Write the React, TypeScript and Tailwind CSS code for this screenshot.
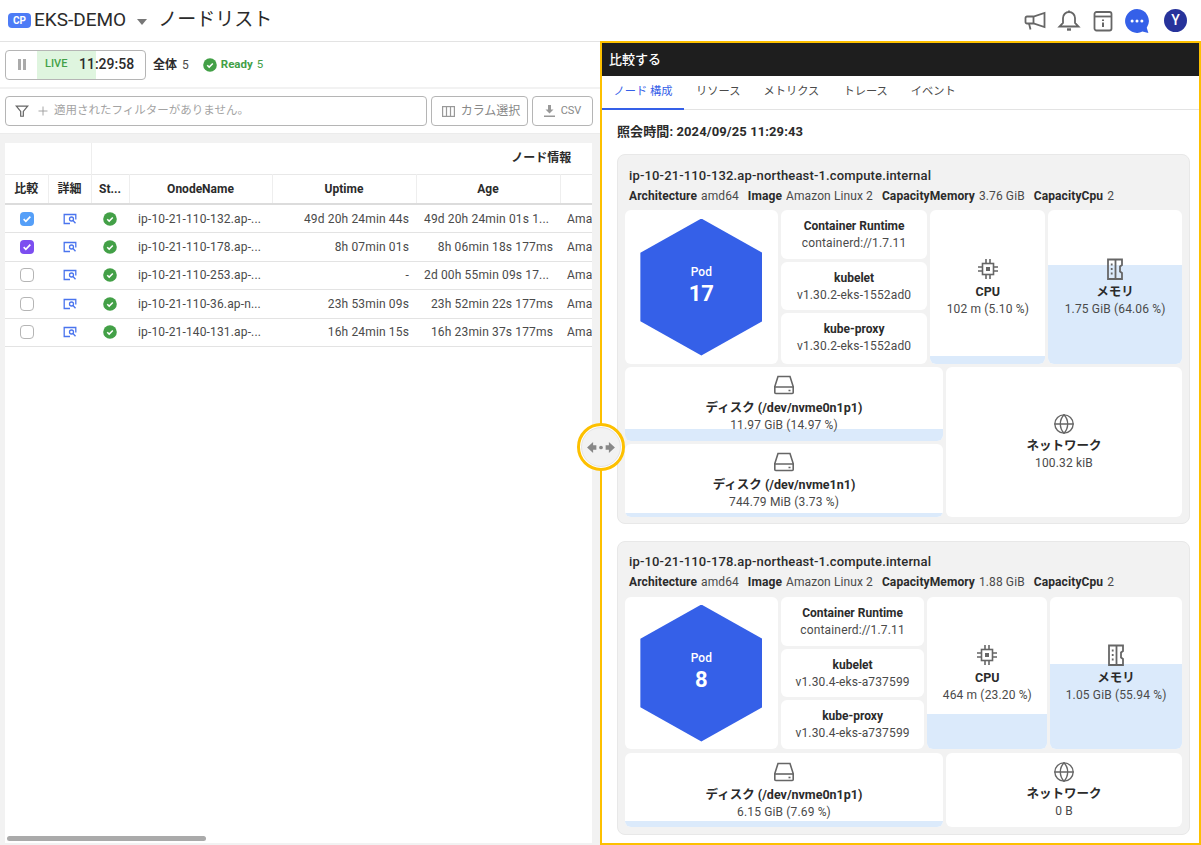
import React from 'react';
import { Globe, Plus } from 'lucide-react';

const nodes = [
  { name: 'ip-10-21-110-132.ap-...', uptime: '49d 20h 24min 44s', age: '49d 20h 24min 01s 1...', check: 'blue' },
  { name: 'ip-10-21-110-178.ap-...', uptime: '8h 07min 01s', age: '8h 06min 18s 177ms', check: 'purple' },
  { name: 'ip-10-21-110-253.ap-...', uptime: '-', age: '2d 00h 55min 09s 17...', check: '' },
  { name: 'ip-10-21-110-36.ap-n...', uptime: '23h 53min 09s', age: '23h 52min 22s 177ms', check: '' },
  { name: 'ip-10-21-140-131.ap-...', uptime: '16h 24min 15s', age: '16h 23min 37s 177ms', check: '' },
];

function CheckCircle({ className }: { className: string }) {
  return (
    <svg viewBox="0 0 14 14" className={className}>
      <circle cx="7" cy="7" r="6.8" fill="#43a047" />
      <path d="M4.2 7.2l2 1.9 3.6-3.7" fill="none" stroke="#fff" strokeWidth="1.5" />
    </svg>
  );
}

function CpuIcon() {
  return (
    <svg viewBox="0 0 24 24" className="w-6 h-6 text-[#666]" fill="none" stroke="currentColor" strokeWidth="1.6">
      <rect x="6.5" y="6.5" width="11" height="11" />
      <rect x="10" y="10" width="4" height="4" fill="currentColor" stroke="none" />
      <path d="M10 2v4.5M14 2v4.5M10 17.5V22M14 17.5V22M2 10h4.5M2 14h4.5M17.5 10H22M17.5 14H22" />
    </svg>
  );
}

function MemoryIcon() {
  return (
    <svg viewBox="0 0 24 24" className="w-6 h-6 text-[#666]" fill="none" stroke="currentColor" strokeWidth="1.8">
      <path d="M5 2.5h14v5.5l-2 1.5v5l2 1.5v6H5z" />
      <path d="M12.5 2.5v19" />
      <path d="M8.7 6.5v2M8.7 11v2M8.7 15.5v2" />
    </svg>
  );
}

function DiskIcon() {
  return (
    <svg viewBox="0 0 24 24" className="w-6 h-6 text-[#666]" fill="none" stroke="currentColor" strokeWidth="1.6">
      <path d="M6 3.5h12l3.2 10v6a1 1 0 0 1-1 1H3.8a1 1 0 0 1-1-1v-6z" />
      <path d="M2.8 14h18.4" />
      <path d="M16.5 17.5h2" />
    </svg>
  );
}

function Tile({ className, fill, icon, title, value }: { className: string; fill?: string; icon?: React.ReactNode; title: string; value: string }) {
  return (
    <div className={`relative overflow-hidden bg-white rounded-md flex flex-col items-center justify-center ${className}`}>
      {fill && <div className={`absolute left-0 right-0 bottom-0 bg-[#dbeafb] ${fill}`} />}
      <div className="relative flex flex-col items-center">
        {icon}
        <div className="mt-[2px] text-[12.5px] leading-[18px] font-bold text-[#2b2b2b] whitespace-nowrap">{title}</div>
        <div className="text-xs leading-[17px] tracking-[0.15px] text-[#4a4a4a] whitespace-nowrap">{value}</div>
      </div>
    </div>
  );
}

function InfoTile({ title, value, className }: { title: string; value: string; className: string }) {
  return (
    <div className={`bg-white rounded-md flex flex-col items-center justify-center ${className}`}>
      <div className="text-xs leading-[18px] font-bold text-[#2b2b2b] whitespace-nowrap">{title}</div>
      <div className="text-xs leading-[17px] tracking-[0.15px] text-[#4a4a4a] whitespace-nowrap">{value}</div>
    </div>
  );
}

function Hex({ pods, className }: { pods: number; className: string }) {
  return (
    <div className={`bg-white rounded-md flex items-center justify-center w-[153px] ${className}`}>
      <div className="w-[122px] h-[137px] pb-[4px] bg-[#3560e8] text-white flex flex-col items-center justify-center [clip-path:polygon(50%_0,100%_25%,100%_75%,50%_100%,0_75%,0_25%)]">
        <div className="text-xs leading-[18px] font-medium">Pod</div>
        <div className="text-[22px] leading-[26px] font-bold">{pods}</div>
      </div>
    </div>
  );
}

function Meta({ memory, cpu }: { memory: string; cpu: string }) {
  const items = [['Architecture', 'amd64'], ['Image', 'Amazon Linux 2'], ['CapacityMemory', memory], ['CapacityCpu', cpu]];
  return (
    <div className="flex gap-[9px] text-xs leading-[18px] tracking-[0.1px] mt-[2px] whitespace-nowrap">
      {items.map(([k, v]) => (
        <div key={k} className="flex gap-1">
          <span className="font-bold text-[#2b2b2b]">{k}</span>
          <span className="text-[#4a4a4a]">{v}</span>
        </div>
      ))}
    </div>
  );
}

export default function App() {
  return (
    <div className="w-[1201px] h-[845px] relative overflow-hidden bg-white text-[#2b2b2b] font-['Roboto','Noto_Sans_CJK_JP',sans-serif]">
      {/* top bar */}
      <div className="h-[42px] border-b border-[#e3e3e3] flex items-center pl-2 pr-[14px]">
        <span className="w-[23px] h-[15px] rounded-[4px] bg-[#4d7cf6] text-white text-[10px] leading-[15px] font-bold text-center">CP</span>
        <span className="ml-[3px] text-[19px] text-[#2b2b2b]">EKS-DEMO</span>
        <span className="ml-[11px] w-0 h-0 border-l-[5px] border-r-[5px] border-t-[6px] border-l-transparent border-r-transparent border-t-[#777] mt-[3px]" />
        <span className="ml-[11px] text-[19px]">ノードリスト</span>
        <div className="ml-auto flex items-center">
          <svg viewBox="0 0 24 24" className="w-6 h-6 text-[#666]" fill="none" stroke="currentColor" strokeWidth="1.8">
            <path d="M21.5 4v14L10.5 14.5H4A1.5 1.5 0 0 1 2.5 13V9A1.5 1.5 0 0 1 4 7.5h6.5z" />
            <path d="M10.5 7.5v7M6 14.5l1.5 6" />
          </svg>
          <svg viewBox="0 0 24 24" className="ml-[10px] w-6 h-6 text-[#666]" fill="none" stroke="currentColor" strokeWidth="1.8">
            <path d="M12 3a6 6 0 0 0-6 6v5l-3.5 3.5h19L18 14V9a6 6 0 0 0-6-6z" />
            <path d="M12 1.5V3" />
            <path d="M10 20.5h4" strokeWidth="2.4" />
          </svg>
          <svg viewBox="0 0 24 24" className="ml-[10px] w-6 h-6 text-[#666]" fill="none" stroke="currentColor" strokeWidth="1.8">
            <rect x="3.5" y="3" width="17" height="18.5" rx="2" />
            <path d="M3.5 7.5h17" />
            <path d="M12 10.5v1.5M12 13.5v4.5" strokeWidth="2" />
          </svg>
          <svg viewBox="0 0 24 24" className="ml-[9px] w-[26px] h-[26px]">
            <path d="M12 1a11 11 0 1 0 5 20.8L22.5 23 21 18.2A11 11 0 0 0 12 1z" fill="#3560e8" />
            <circle cx="7.5" cy="12" r="1.4" fill="#fff" />
            <circle cx="12" cy="12" r="1.4" fill="#fff" />
            <circle cx="16.5" cy="12" r="1.4" fill="#fff" />
          </svg>
          <span className="ml-[14px] w-[23px] h-[23px] rounded-full bg-[#27339b] text-white text-[14px] font-medium flex items-center justify-center">Y</span>
        </div>
      </div>

      <div className="flex h-[803px]">
        {/* left panel */}
        <div className="relative w-[600px] bg-[#f2f2f2] flex flex-col shrink-0">
          <div className="h-[45px] bg-white flex items-center pl-[5px] pr-2 text-xs">
            <div className="h-[30px] w-[141px] border border-[#b5b5b5] rounded-[4px] flex overflow-hidden">
              <div className="w-[31px] flex items-center justify-center gap-[2px]">
                <span className="w-[3px] h-[11px] bg-[#aaa]" />
                <span className="w-[3px] h-[11px] bg-[#aaa]" />
              </div>
              <div className="w-[59px] bg-[#dff5df] flex items-center pl-2 text-[11px] font-medium text-[#43a047]">LIVE</div>
              <span className="-ml-[17px] self-center text-[14px] font-medium text-[#2b2b2b]">11:29:58</span>
            </div>
            <span className="ml-[7px] font-bold text-[#2b2b2b]">全体</span>
            <span className="ml-[5px] text-[#4a4a4a]">5</span>
            <CheckCircle className="ml-[14px] w-[14px] h-[14px]" />
            <span className="ml-[4px] text-[11.5px] font-bold text-[#43a047]">Ready</span>
            <span className="ml-[4px] text-[11.5px] text-[#43a047]">5</span>
          </div>
          <div className="mt-[2px] h-[45px] bg-white flex items-center gap-[4px] pl-[5px] border-b border-[#ececec]">
            <div className="w-[422px] h-[30px] border border-[#b5b5b5] rounded-[4px] flex items-center pl-[9px] text-[11.5px] text-[#a3a3a3]">
              <svg viewBox="0 0 16 16" className="w-[14px] h-[14px] text-[#666]" fill="none" stroke="currentColor" strokeWidth="1.4">
                <path d="M1.5 2.5h13l-5 6v5.5h-3V8.5z" />
              </svg>
              <Plus className="ml-[7px] w-[14px] h-[14px] text-[#999]" strokeWidth={1.5} />
              <span className="ml-[4px]">適用されたフィルターがありません。</span>
            </div>
            <div className="w-[97px] h-[30px] border border-[#b5b5b5] rounded-[4px] flex items-center justify-center gap-[6px] pl-[3px] text-xs text-[#888]">
              <svg viewBox="0 0 13 11" className="w-[13px] h-[11px]" fill="none" stroke="#999" strokeWidth="1.2">
                <rect x="0.6" y="0.6" width="11.8" height="9.8" />
                <path d="M4.5 0.6v9.8M8.5 0.6v9.8" />
              </svg>
              カラム選択
            </div>
            <div className="w-[61px] h-[30px] border border-[#b5b5b5] rounded-[4px] flex items-center justify-center gap-[6px] text-[11px] text-[#888]">
              <svg viewBox="0 0 11 12" className="w-[11px] h-[12px]" fill="#999">
                <path d="M4 0h3v4.5h2.5L5.5 8.5l-4-4H4zM0 10.4h11V12H0z" />
              </svg>
              CSV
            </div>
          </div>
          <div className="ml-[5px] mt-[9px] w-[587px] h-[700px] bg-white overflow-hidden">
            <table className="table-fixed w-[986px] border-collapse text-xs">
              <colgroup>
                <col className="w-[43px]" />
                <col className="w-[43px]" />
                <col className="w-[38px]" />
                <col className="w-[143px]" />
                <col className="w-[144px]" />
                <col className="w-[144px]" />
                <col className="w-[431px]" />
              </colgroup>
              <thead>
                <tr className="h-[31px] border-b border-[#e8e8e8]">
                  <th colSpan={2} className="border-r border-[#eee]" />
                  <th colSpan={5} className="font-bold text-center text-[#2b2b2b]">ノード情報</th>
                </tr>
                <tr className="h-[30px] border-b-2 border-[#dcdcdc]">
                  {['比較', '詳細', 'St...', 'OnodeName', 'Uptime', 'Age', ''].map((h, i) => (
                    <th key={i} className="font-bold text-center text-[#2b2b2b] border-r border-[#eee]">{h}</th>
                  ))}
                </tr>
              </thead>
              <tbody>
                {nodes.map(n => (
                  <tr key={n.name} className="h-[28.5px] border-b border-[#e3e3e3] text-[#4a4a4a] tracking-[0.15px]">
                    <td>
                      {n.check ? (
                        <span className={`mx-auto w-[14px] h-[14px] rounded-[4px] flex items-center justify-center ${n.check === 'blue' ? 'bg-[#559ff8]' : 'bg-[#7c4ef0]'}`}>
                          <svg viewBox="0 0 12 12" className="w-[10px] h-[10px]" fill="none" stroke="#fff" strokeWidth="2"><path d="M2 6.2l2.6 2.5L10 3.2" /></svg>
                        </span>
                      ) : (
                        <span className="block mx-auto w-[14px] h-[14px] rounded-[4px] border border-[#b5b5b5] bg-white" />
                      )}
                    </td>
                    <td>
                      <svg viewBox="0 0 14 12" className="mx-auto w-[14px] h-[12px]" fill="none" stroke="#4a74ee" strokeWidth="1.3">
                        <path d="M7 10.5H1.2V1.5h11.6v5" />
                        <circle cx="8.5" cy="6" r="2" />
                        <path d="M10 7.5l2.5 2.8" />
                      </svg>
                    </td>
                    <td><CheckCircle className="mx-auto w-[14px] h-[14px]" /></td>
                    <td className="pl-[9px] whitespace-nowrap">{n.name}</td>
                    <td className="pr-[7px] text-right whitespace-nowrap">{n.uptime}</td>
                    <td className={`whitespace-nowrap ${n.age.endsWith('...') ? 'pl-[8px] text-left' : 'pr-[7px] text-right'}`}>{n.age}</td>
                    <td className="pl-[7px]">Amazon Linux 2</td>
                  </tr>
                ))}
              </tbody>
            </table>
          </div>
          <div className="absolute left-[7px] bottom-[4px] w-[199px] h-[5px] rounded-full bg-[#aaa]" />
        </div>

        {/* right panel */}
        <div className="w-[601px] border-2 border-[#fdc000] shrink-0 -mt-[1px] flex flex-col overflow-hidden">
          <div className="h-[33px] bg-[#1e1e1e] text-white text-[13px] font-medium flex items-center pl-[7px] shrink-0">比較する</div>
          <div className="h-[34px] border-b border-[#e3e3e3] flex text-[11.25px] text-[#4a4a4a] shrink-0">
            <span className="w-[82px] flex items-center justify-center text-[#3560e8] border-b-2 border-[#3560e8] h-[34px]">ノード 構成</span>
            <span className="ml-[12px] flex items-center">リソース</span>
            <span className="ml-[23px] flex items-center">メトリクス</span>
            <span className="ml-[24px] flex items-center">トレース</span>
            <span className="ml-[23px] flex items-center">イベント</span>
          </div>
          <div className="pl-[15px] pt-[13px] text-[13px] leading-[18px] tracking-[0.1px] font-bold text-[#2b2b2b]">照会時間: 2024/09/25 11:29:43</div>

          <div className="ml-[15px] mt-[13px] w-[573px] h-[370px] bg-[#f2f2f2] border border-[#e8e8e8] rounded-lg px-[7px] shrink-0">
            <div className="pl-[4px] pt-[12px] text-[13px] leading-[18px] tracking-[0.15px] font-medium text-[#2b2b2b]">ip-10-21-110-132.ap-northeast-1.compute.internal</div>
            <div className="pl-[4px]"><Meta memory="3.76 GiB" cpu="2" /></div>
            <div className="mt-[5px] flex gap-[3px] h-[154px]">
              <Hex pods={17} className="h-full" />
              <div className="w-[147px] flex flex-col gap-[3px]">
                <InfoTile className="flex-1" title="Container Runtime" value="containerd://1.7.11" />
                <InfoTile className="flex-1" title="kubelet" value="v1.30.2-eks-1552ad0" />
                <InfoTile className="flex-1 pb-[2px]" title="kube-proxy" value="v1.30.2-eks-1552ad0" />
              </div>
              <Tile className="w-[115px]" fill="h-[8px]" icon={<CpuIcon />} title="CPU" value="102 m (5.10 %)" />
              <Tile className="w-[134px]" fill="h-[99px]" icon={<MemoryIcon />} title="メモリ" value="1.75 GiB (64.06 %)" />
            </div>
            <div className="mt-[3px] flex gap-[3px] h-[150px]">
              <div className="w-[318px] flex flex-col gap-[3px]">
                <Tile className="flex-1" fill="h-[12px]" icon={<DiskIcon />} title="ディスク (/dev/nvme0n1p1)" value="11.97 GiB (14.97 %)" />
                <Tile className="flex-1" fill="h-[4px]" icon={<DiskIcon />} title="ディスク (/dev/nvme1n1)" value="744.79 MiB (3.73 %)" />
              </div>
              <Tile className="flex-1" icon={<Globe className="w-[22px] h-[22px] text-[#666]" strokeWidth={1.5} />} title="ネットワーク" value="100.32 kiB" />
            </div>
          </div>

          <div className="ml-[15px] mt-[17px] w-[573px] h-[294px] bg-[#f2f2f2] border border-[#e8e8e8] rounded-lg px-[7px] shrink-0">
            <div className="pl-[4px] pt-[11px] text-[13px] leading-[18px] tracking-[0.15px] font-medium text-[#2b2b2b]">ip-10-21-110-178.ap-northeast-1.compute.internal</div>
            <div className="pl-[4px]"><Meta memory="1.88 GiB" cpu="2" /></div>
            <div className="mt-[6px] flex gap-[3px] h-[152px]">
              <Hex pods={8} className="h-full" />
              <div className="w-[144px] flex flex-col gap-[3px]">
                <InfoTile className="flex-1" title="Container Runtime" value="containerd://1.7.11" />
                <InfoTile className="flex-1" title="kubelet" value="v1.30.4-eks-a737599" />
                <InfoTile className="flex-1" title="kube-proxy" value="v1.30.4-eks-a737599" />
              </div>
              <Tile className="w-[120px]" fill="h-[35px]" icon={<CpuIcon />} title="CPU" value="464 m (23.20 %)" />
              <Tile className="w-[132px]" fill="h-[85px]" icon={<MemoryIcon />} title="メモリ" value="1.05 GiB (55.94 %)" />
            </div>
            <div className="mt-[4px] flex gap-[3px] h-[74px]">
              <Tile className="w-[318px]" fill="h-[6px]" icon={<DiskIcon />} title="ディスク (/dev/nvme0n1p1)" value="6.15 GiB (7.69 %)" />
              <Tile className="flex-1" icon={<Globe className="w-[22px] h-[22px] text-[#666]" strokeWidth={1.5} />} title="ネットワーク" value="0 B" />
            </div>
          </div>
        </div>
      </div>

      {/* resize handle */}
      <div className="absolute left-[577px] top-[423px] w-[48px] h-[48px] rounded-full border-[3px] border-[#fdc000] bg-white flex items-center justify-center">
        <div className="w-[40px] h-[40px] rounded-full bg-[#f2f2f2] border border-[#e3e3e3] flex items-center justify-center">
          <svg viewBox="0 0 32 14" className="w-[30px] h-[13px] text-[#888]" fill="currentColor">
            <path d="M1 7l6.5-6v3.5H11v5H7.5V13zM31 7l-6.5-6v3.5H21v5h3.5V13z" />
            <circle cx="16" cy="7" r="2" />
          </svg>
        </div>
      </div>
    </div>
  );
}
